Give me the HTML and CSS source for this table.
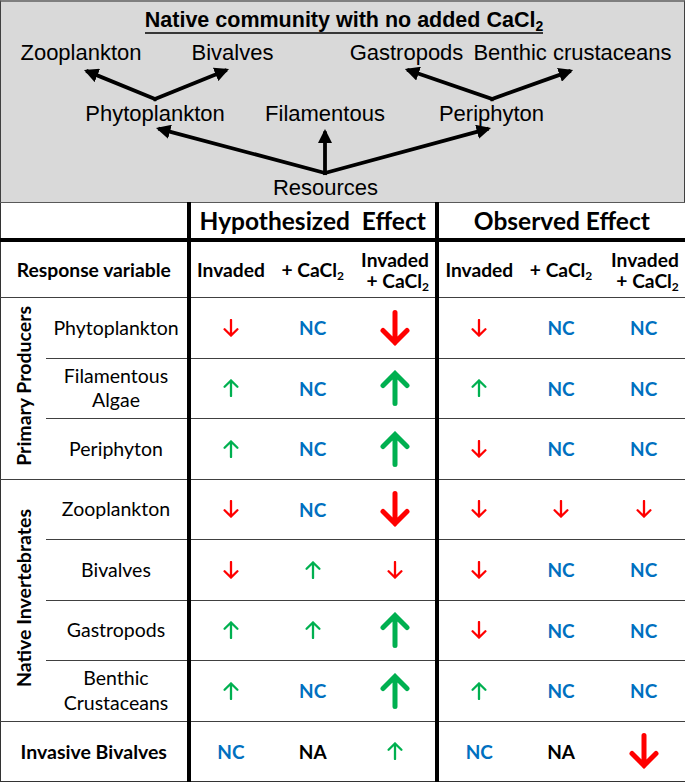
FILE: index.html
```html
<!DOCTYPE html>
<html>
<head>
<meta charset="utf-8">
<link rel="stylesheet" href="styles.css">
</head>
<body>
<svg class="defs" aria-hidden="true">
  <symbol id="sm" viewBox="0 0 16 18"><path d="M8 1 V16.3 M1.6 10.2 L8 16.5 L14.4 10.2" fill="none" stroke="currentColor" stroke-width="2.3" stroke-linecap="round" stroke-linejoin="miter"/></symbol>
  <symbol id="lg" viewBox="0 0 30 36"><path d="M15 2.5 V32.5 M3 20.5 L15 32.5 L27 20.5" fill="none" stroke="currentColor" stroke-width="5" stroke-linecap="round" stroke-linejoin="miter"/></symbol>
</svg>
<div class="fig">
  <div class="diagram">
    <svg class="web" viewBox="0 0 683 200" width="683" height="200">
      <defs>
        <marker id="ah" viewBox="0 0 10 10" refX="7" refY="5" markerWidth="3.8" markerHeight="3.8" orient="auto-start-reverse">
          <path d="M0 0 L10 5 L0 10 Z" fill="#000"/>
        </marker>
      </defs>
      <text class="title" x="343" y="25">Native community with no added CaCl<tspan class="sub" dy="4">2</tspan></text>
      <line x1="144" y1="31" x2="542" y2="31" stroke="#000" stroke-width="1.6"/>
      <text class="lab" x="80" y="58">Zooplankton</text>
      <text class="lab" x="231.5" y="58">Bivalves</text>
      <text class="lab" x="405.5" y="58">Gastropods</text>
      <text class="lab" x="571.5" y="58">Benthic crustaceans</text>
      <text class="lab" x="154" y="118.5">Phytoplankton</text>
      <text class="lab" x="324" y="118.5">Filamentous</text>
      <text class="lab" x="490.5" y="118.5">Periphyton</text>
      <text class="lab" x="324.5" y="193">Resources</text>
      <g stroke="#000" stroke-width="3.8" marker-end="url(#ah)" stroke-linecap="square">
        <line x1="154" y1="97" x2="87" y2="69.6"/>
        <line x1="154" y1="97" x2="224" y2="68.6"/>
        <line x1="491" y1="97" x2="408" y2="68.4"/>
        <line x1="491" y1="97" x2="568" y2="69.5"/>
        <line x1="324" y1="171" x2="159.2" y2="127.1"/>
        <line x1="324" y1="171" x2="324" y2="131.3"/>
        <line x1="324" y1="171" x2="485.8" y2="127.1"/>
      </g>
    </svg>
  </div>
  <table class="grid">
    <colgroup>
      <col class="c-cat"><col class="c-name">
      <col class="c-d"><col class="c-d"><col class="c-d">
      <col class="c-d"><col class="c-d"><col class="c-d">
    </colgroup>
    <thead>
      <tr class="h1">
        <th colspan="2" class="blank"></th>
        <th colspan="3" class="grp sep">Hypothesized&nbsp; Effect</th>
        <th colspan="3" class="grp sep">Observed Effect</th>
      </tr>
      <tr class="h2">
        <th colspan="2" class="rv">Response variable</th>
        <th class="sep">Invaded</th>
        <th>+ CaCl<sub>2</sub></th>
        <th class="two">Invaded<br>+ CaCl<sub>2</sub></th>
        <th class="sep">Invaded</th>
        <th>+ CaCl<sub>2</sub></th>
        <th class="two">Invaded<br>+ CaCl<sub>2</sub></th>
      </tr>
    </thead>
    <tbody>
      <tr class="gtop">
        <th rowspan="3" class="cat"><span>Primary Producers</span></th>
        <td class="name">Phytoplankton</td>
        <td class="sep"><svg class="a sm dn"><use href="#sm"/></svg></td>
        <td class="nc">NC</td>
        <td><svg class="a lg dn"><use href="#lg"/></svg></td>
        <td class="sep"><svg class="a sm dn"><use href="#sm"/></svg></td>
        <td class="nc">NC</td>
        <td class="nc">NC</td>
      </tr>
      <tr>
        <td class="name">Filamentous<br>Algae</td>
        <td class="sep"><svg class="a sm up"><use href="#sm"/></svg></td>
        <td class="nc">NC</td>
        <td><svg class="a lg up"><use href="#lg"/></svg></td>
        <td class="sep"><svg class="a sm up"><use href="#sm"/></svg></td>
        <td class="nc">NC</td>
        <td class="nc">NC</td>
      </tr>
      <tr>
        <td class="name">Periphyton</td>
        <td class="sep"><svg class="a sm up"><use href="#sm"/></svg></td>
        <td class="nc">NC</td>
        <td><svg class="a lg up"><use href="#lg"/></svg></td>
        <td class="sep"><svg class="a sm dn"><use href="#sm"/></svg></td>
        <td class="nc">NC</td>
        <td class="nc">NC</td>
      </tr>
      <tr class="gtop">
        <th rowspan="4" class="cat"><span>Native Invertebrates</span></th>
        <td class="name">Zooplankton</td>
        <td class="sep"><svg class="a sm dn"><use href="#sm"/></svg></td>
        <td class="nc">NC</td>
        <td><svg class="a lg dn"><use href="#lg"/></svg></td>
        <td class="sep"><svg class="a sm dn"><use href="#sm"/></svg></td>
        <td><svg class="a sm dn"><use href="#sm"/></svg></td>
        <td><svg class="a sm dn"><use href="#sm"/></svg></td>
      </tr>
      <tr>
        <td class="name">Bivalves</td>
        <td class="sep"><svg class="a sm dn"><use href="#sm"/></svg></td>
        <td><svg class="a sm up"><use href="#sm"/></svg></td>
        <td><svg class="a sm dn"><use href="#sm"/></svg></td>
        <td class="sep"><svg class="a sm dn"><use href="#sm"/></svg></td>
        <td class="nc">NC</td>
        <td class="nc">NC</td>
      </tr>
      <tr>
        <td class="name">Gastropods</td>
        <td class="sep"><svg class="a sm up"><use href="#sm"/></svg></td>
        <td><svg class="a sm up"><use href="#sm"/></svg></td>
        <td><svg class="a lg up"><use href="#lg"/></svg></td>
        <td class="sep"><svg class="a sm dn"><use href="#sm"/></svg></td>
        <td class="nc">NC</td>
        <td class="nc">NC</td>
      </tr>
      <tr>
        <td class="name">Benthic<br>Crustaceans</td>
        <td class="sep"><svg class="a sm up"><use href="#sm"/></svg></td>
        <td class="nc">NC</td>
        <td><svg class="a lg up"><use href="#lg"/></svg></td>
        <td class="sep"><svg class="a sm up"><use href="#sm"/></svg></td>
        <td class="nc">NC</td>
        <td class="nc">NC</td>
      </tr>
      <tr class="gtop last">
        <th colspan="2" class="inv">Invasive Bivalves</th>
        <td class="sep nc">NC</td>
        <td class="na">NA</td>
        <td><svg class="a sm up"><use href="#sm"/></svg></td>
        <td class="sep nc">NC</td>
        <td class="na">NA</td>
        <td><svg class="a lg dn"><use href="#lg"/></svg></td>
      </tr>
    </tbody>
  </table>
</div>
</body>
</html>
```
FILE: styles.css
```css
html, body {
  margin: 0;
  padding: 0;
  background: #fff;
}
.defs {
  position: absolute;
  width: 0;
  height: 0;
  overflow: hidden;
}
.fig {
  width: 685px;
}
.diagram {
  background: #d9d9d9;
  border-top: 2px solid #7f7f7f;
  border-left: 1px solid #404040;
  border-right: 1px solid #404040;
  height: 200px;
}
.web {
  display: block;
}
.web text {
  font-family: "Liberation Sans", Arial, sans-serif;
  text-anchor: middle;
  fill: #000;
}
.web .lab {
  font-size: 22px;
}
.web .title {
  font-size: 21.5px;
  font-weight: bold;
}
.web .sub {
  font-size: 14px;
}
.grid {
  border-collapse: collapse;
  table-layout: fixed;
  width: 685px;
  font-family: Lato, "Open Sans", sans-serif;
  color: #000;
  border: 1px solid #333;
}
.c-cat { width: 45px; }
.c-name { width: 143px; }
.c-d { width: 82.8px; }
.grid th, .grid td {
  padding: 0;
  text-align: center;
  vertical-align: middle;
  border-top: 1px solid #404040;
  white-space: nowrap;
}
.grid .sep {
  border-left: 4px solid #000;
}
.h1 th {
  height: 35px;
  border-bottom: 4px solid #000;
  border-top: 1px solid #595959;
}
.h1 .grp {
  font-size: 24.5px;
  font-weight: bold;
  line-height: 30px;
}
.h2 th {
  height: 55px;
  font-size: 19.2px;
  font-weight: bold;
  line-height: 21px;
}
.h2 sub {
  font-size: 12px;
  vertical-align: -3px;
  line-height: 0;
}
.h2 .rv {
  font-size: 19.3px;
}
.h2 .two {
  text-align: right;
  padding-right: 6px;
}
tbody tr {
  height: 60.5px;
}
tbody td, tbody th {
  font-size: 19px;
}
.grid .cat {
  border-top: 1px solid #404040;
  border-bottom: 1px solid #404040;
  font-weight: bold;
  font-size: 19.5px;
}
.cat span {
  display: inline-block;
  writing-mode: vertical-rl;
  transform: rotate(180deg);
  white-space: nowrap;
}
.name {
  font-size: 19.5px;
  line-height: 24.5px;
}
.nc {
  color: #0070c0;
  font-weight: bold;
  font-size: 19px;
}
.na {
  font-weight: bold;
  font-size: 19px;
}
.inv {
  font-weight: bold;
  font-size: 19.5px;
}
.a {
  display: block;
  margin: 0 auto;
  color: #ff0000;
}
.a.up {
  color: #00b050;
  transform: scaleY(-1);
}
.a.sm {
  width: 16px;
  height: 18px;
}
.a.lg {
  width: 30px;
  height: 36px;
}
```
